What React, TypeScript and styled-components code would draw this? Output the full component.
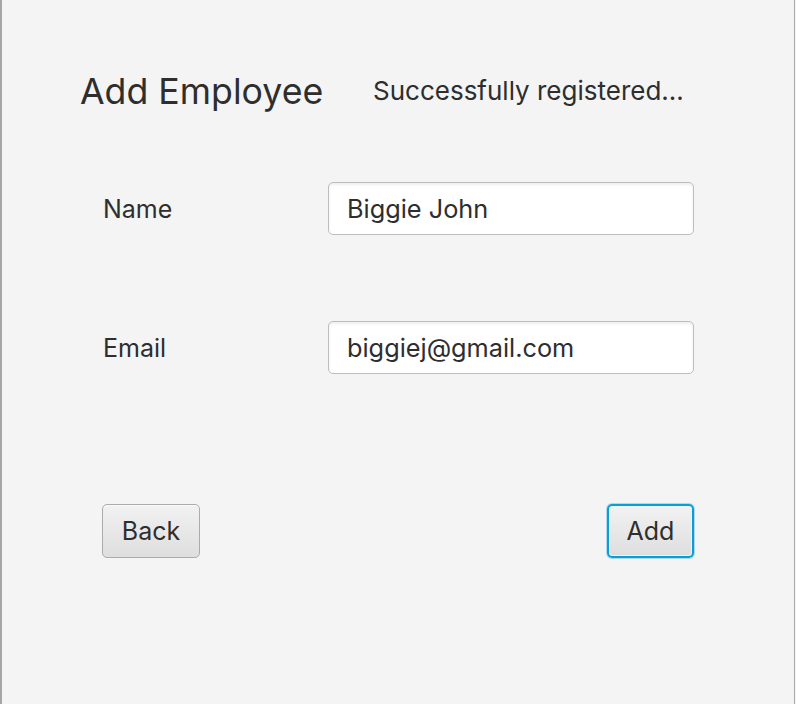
import React from "react";
import styled, { createGlobalStyle } from "styled-components";

const Global = createGlobalStyle`
  html, body {
    margin: 0;
    padding: 0;
    background: #f4f4f4;
  }
  * { box-sizing: border-box; }
`;

const Window = styled.div`
  width: 795px;
  height: 704px;
  background: #f4f4f4;
  border-left: 2px solid #a6a6a6;
  border-right: 1px solid #a9a9a9;
  font-family: Inter, "Noto Sans", "Liberation Sans", sans-serif;
  color: #2e2e2e;
  display: flex;
  flex-direction: column;
  padding-top: 61px;
`;

const Header = styled.div`
  height: 60px;
  display: flex;
  align-items: center;
  padding-left: 78px;
`;

const Title = styled.h1`
  margin: 0;
  font-size: 35.7px;
  font-weight: 400;
  line-height: 60px;
  width: 293px;
`;

const Status = styled.div`
  font-size: 26px;
  line-height: 60px;
`;

const Form = styled.div`
  display: flex;
  flex-direction: column;
  gap: 86px;
  padding-left: 101px;
  margin-top: 61px;
`;

const Row = styled.div`
  display: flex;
  align-items: center;
  height: 53px;
`;

const Label = styled.label`
  width: 225px;
  font-size: 25px;
  line-height: 30px;
`;

const Input = styled.input`
  width: 366px;
  height: 53px;
  border: 1px solid #bdbdbd;
  border-radius: 5px;
  background: #ffffff;
  box-shadow: inset 0 2px 3px rgba(0, 0, 0, 0.07);
  padding: 0 0 0 18px;
  font-family: Inter, "Noto Sans", "Liberation Sans", sans-serif;
  font-size: 25.3px;
  color: #2e2e2e;
  outline: none;
`;

const Buttons = styled.div`
  display: flex;
  justify-content: space-between;
  width: 592px;
  margin-left: 100px;
  margin-top: 130px;
`;

const Button = styled.button<{ $focused?: boolean; $w: number }>`
  width: ${(p) => p.$w}px;
  height: 54px;
  border-radius: 5px;
  border: ${(p) => (p.$focused ? "2px solid #0a9dd6" : "1px solid #ababab")};
  background: linear-gradient(#f2f2f2, #dedede);
  box-shadow: ${(p) =>
    p.$focused
      ? "0 0 0 1px rgba(10,157,214,0.3), inset 0 0 0 1px #e9f5fb"
      : "inset 0 1px 0 rgba(255,255,255,0.6)"};
  font-family: Inter, "Noto Sans", "Liberation Sans", sans-serif;
  font-size: 25px;
  color: #2e2e2e;
  padding: 0;
  cursor: pointer;
`;

export default function App() {
  return (
    <>
      <Global />
      <Window>
        <Header>
          <Title>Add Employee</Title>
          <Status>Successfully registered...</Status>
        </Header>
        <Form>
          <Row>
            <Label>Name</Label>
            <Input defaultValue="Biggie John" />
          </Row>
          <Row>
            <Label>Email</Label>
            <Input defaultValue="biggiej@gmail.com" />
          </Row>
        </Form>
        <Buttons>
          <Button $w={98}>Back</Button>
          <Button $w={87} $focused>
            Add
          </Button>
        </Buttons>
      </Window>
    </>
  );
}
